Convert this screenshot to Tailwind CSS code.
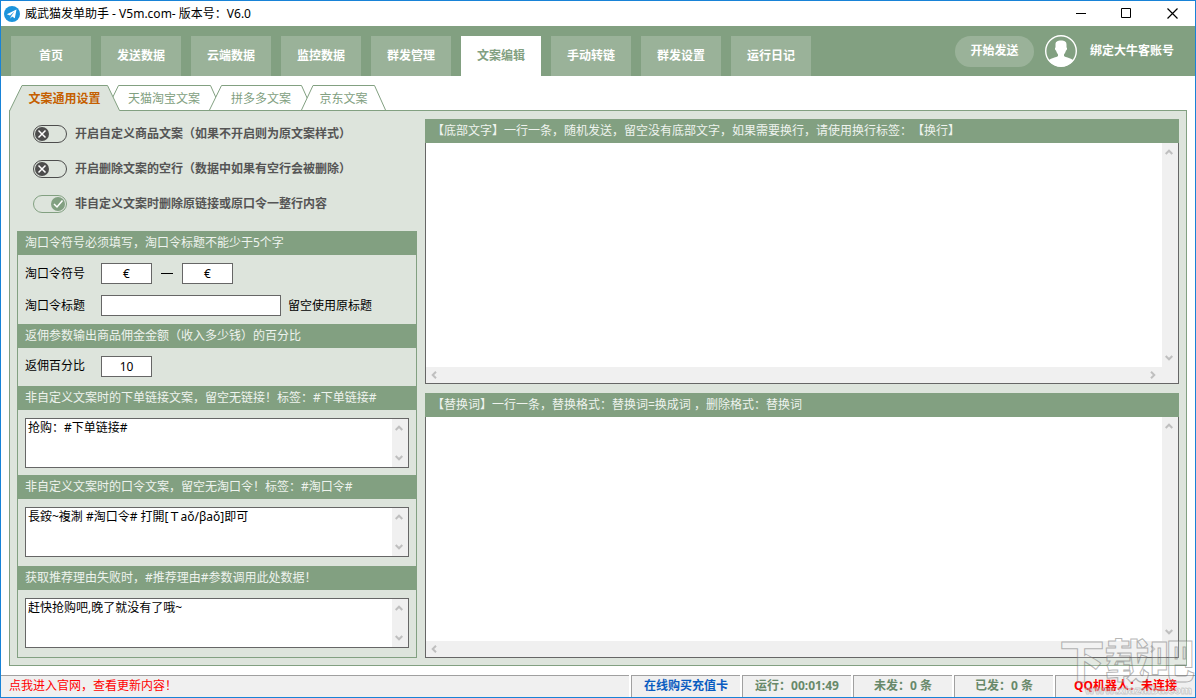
<!DOCTYPE html>
<html lang="zh-CN">
<head>
<meta charset="utf-8">
<title>威武猫发单助手</title>
<script src="https://cdn.jsdelivr.net/npm/@tailwindcss/browser@4"></script>
</head>
<body class="font-['Noto_Sans','Noto_Sans_CJK_SC',sans-serif] text-xs text-black [text-spacing-trim:space-all]">
<svg class="hidden">
  <symbol id="up" viewBox="0 0 8 6"><path d="M0.7 5 4 1.7 7.300 5" fill="none" stroke="#bfbfbf" stroke-width="2"/></symbol>
  <symbol id="down" viewBox="0 0 8 6"><path d="M0.7 1 4 4.3 7.3 1" fill="none" stroke="#bfbfbf" stroke-width="2"/></symbol>
  <symbol id="left" viewBox="0 0 6 8"><path d="M5 0.7 1.700 4 5 7.300" fill="none" stroke="#bfbfbf" stroke-width="2"/></symbol>
  <symbol id="right" viewBox="0 0 6 8"><path d="M1 0.7 4.300 4 1 7.3" fill="none" stroke="#bfbfbf" stroke-width="2"/></symbol>
</svg>
<div class="relative flex min-h-screen flex-col overflow-hidden border border-[#1883d7] bg-white">

  <!-- Title bar -->
  <header class="flex h-[25px] items-center pl-[3px]">
    <svg class="size-4" viewBox="0 0 16 16"><circle cx="8" cy="8" r="8" fill="#1c94dc"/><path d="M2.800 8.300 12.500 3.500 10.800 12.300 8 10.500 6.500 12.500 6 9.500Z" fill="#fff"/><path d="M6 9.500 10.500 5.500 7.200 10 6.500 12.500Z" fill="#1c94dc"/></svg>
    <h1 class="ml-[5px] flex-1 leading-4">威武猫发单助手 - V5m.com- 版本号：V6.0</h1>
    <div class="flex">
      <button class="grid h-6 w-[45px] place-items-center" aria-label="最小化"><svg class="h-[11px] w-[11px]" viewBox="0 0 11 11"><path d="M0 5.5H10" stroke="#000"/></svg></button>
      <button class="grid h-6 w-[45px] place-items-center" aria-label="最大化"><svg class="h-[11px] w-[11px]" viewBox="0 0 11 11"><path d="M.5.5H9.500V9.500H.5Z" fill="none" stroke="#000"/></svg></button>
      <button class="grid h-6 w-[46px] place-items-center" aria-label="关闭"><svg class="h-[11px] w-[11px]" viewBox="0 0 11 11"><path d="M.5.5 10.500 10.500M10.500.5.5 10.500" stroke="#000" stroke-width="1.200"/></svg></button>
    </div>
  </header>

  <!-- Main navigation -->
  <nav class="flex h-[50px] items-end bg-[#82a081] pl-[10px] font-bold text-white">
    <div class="flex flex-1 gap-[10px]">
      <button class="h-10 w-20 bg-[#9ab299]">首页</button>
      <button class="h-10 w-20 bg-[#9ab299]">发送数据</button>
      <button class="h-10 w-20 bg-[#9ab299]">云端数据</button>
      <button class="h-10 w-20 bg-[#9ab299]">监控数据</button>
      <button class="h-10 w-20 bg-[#9ab299]">群发管理</button>
      <button class="h-10 w-20 bg-white text-[#82a081]">文案编辑</button>
      <button class="h-10 w-20 bg-[#9ab299]">手动转链</button>
      <button class="h-10 w-20 bg-[#9ab299]">群发设置</button>
      <button class="h-10 w-20 bg-[#9ab299]">运行日记</button>
    </div>
    <div class="flex items-center self-stretch pr-[21px]">
      <button class="h-[31px] w-[79px] rounded-full bg-[#9ab299]">开始发送</button>
      <svg class="ml-[11px] size-8" viewBox="0 0 32 32"><circle cx="16" cy="16" r="15.300" fill="none" stroke="#fff" stroke-width="1.400"/><path d="M10.500 9.500C10.500 6.500 12.500 5.500 16 5.500S21.500 6.500 21.500 9.500V12.500C22.500 12.500 22 15.500 21 15.500 20.500 17.500 19.500 18.500 19 19.500V21C20.500 22.500 25.500 22.500 28.500 25.500A16 16 0 0 1 3.500 25.500C6.500 22.500 11.500 22.500 13 21V19.500C12.500 18.500 11.500 17.500 11 15.500 10 15.500 9.500 12.500 10.500 12.500Z" fill="#fff"/></svg>
      <button class="ml-[13px]">绑定大牛客账号</button>
    </div>
  </nav>

  <main class="flex flex-1 flex-col px-2 pt-[9px] pb-[9px]">
    <!-- Sub tabs -->
    <div class="relative z-10 -mb-px flex h-[26px] text-[#82a081]">
      <button class="relative z-20 h-[26px] w-[111px] pt-[2px] font-bold text-[#c55f00]">
        <svg class="absolute inset-0 size-full" viewBox="0 0 111 26"><path d="M.5 26 13 .5H98.500L110.500 25.500V26Z" fill="#dde4dc"/><path d="M.5 26 13 .5H98.500L110.500 25.500" fill="none" stroke="#82a081"/></svg>
        <span class="relative">文案通用设置</span>
      </button>
      <button class="relative -ml-[14px] h-[25px] w-[116px] pt-[2px]">
        <svg class="absolute inset-0 size-full" viewBox="0 0 116 25"><path d="M.5 25 12.500 .5H104.500L115.500 25" fill="#fff" stroke="#82a081"/></svg>
        <span class="relative">天猫淘宝文案</span>
      </button>
      <button class="relative -ml-[13px] h-[25px] w-[104px] pt-[2px]">
        <svg class="absolute inset-0 size-full" viewBox="0 0 104 25"><path d="M.5 25 12.500 .5H92.500L103.500 25" fill="#fff" stroke="#82a081"/></svg>
        <span class="relative">拼多多文案</span>
      </button>
      <button class="relative -ml-3 h-[25px] w-[85px] pt-[2px]">
        <svg class="absolute inset-0 size-full" viewBox="0 0 85 25"><path d="M.5 25 12 .5H73.500L84.500 25" fill="#fff" stroke="#82a081"/></svg>
        <span class="relative">京东文案</span>
      </button>
    </div>

    <div class="flex flex-1 gap-2 border border-[#82a081] bg-[#dde4dc] px-[7px] pt-2 pb-[7px]">
      <!-- Left column -->
      <section class="w-[400px] shrink-0">
        <div class="flex h-28 flex-col gap-[17px] pt-[6px] pl-4 font-bold text-[#555]">
          <label class="flex h-[18px] items-center gap-2"><input type="checkbox" class="sr-only">
            <svg class="h-[18px] w-[34px]" viewBox="0 0 34 18"><rect x=".5" y=".5" width="33" height="17" rx="8.500" fill="none" stroke="#4d4d4d"/><circle cx="9" cy="9" r="7" fill="#4d4d4d"/><path d="M5.500 5.500 12.500 12.500M12.500 5.500 5.500 12.500" stroke="#fff" stroke-width="1.500"/></svg>
            开启自定义商品文案（如果不开启则为原文案样式）</label>
          <label class="flex h-[18px] items-center gap-2"><input type="checkbox" class="sr-only">
            <svg class="h-[18px] w-[34px]" viewBox="0 0 34 18"><rect x=".5" y=".5" width="33" height="17" rx="8.500" fill="none" stroke="#4d4d4d"/><circle cx="9" cy="9" r="7" fill="#4d4d4d"/><path d="M5.500 5.500 12.500 12.500M12.500 5.500 5.500 12.500" stroke="#fff" stroke-width="1.500"/></svg>
            开启删除文案的空行（数据中如果有空行会被删除）</label>
          <label class="flex h-[18px] items-center gap-2"><input type="checkbox" checked class="sr-only">
            <svg class="h-[18px] w-[34px]" viewBox="0 0 34 18"><rect x=".5" y=".5" width="33" height="17" rx="8.500" fill="none" stroke="#82a081"/><circle cx="25" cy="9" r="7" fill="#82a081"/><path d="M21 9 24 12 29.500 5.500" fill="none" stroke="#fff" stroke-width="1.500"/></svg>
            非自定义文案时删除原链接或原口令一整行内容</label>
        </div>

        <div class="border-x border-b border-[#82a081]">
          <h2 class="h-6 bg-[#82a081] pl-[7px] leading-6 text-[#eef3ee]">淘口令符号必须填写，淘口令标题不能少于5个字</h2>
          <div class="flex flex-col gap-[11px] px-[7px] py-2">
            <div class="flex h-[21px] items-center">
              <label for="sym1" class="w-[76px] leading-4">淘口令符号</label>
              <input id="sym1" value="€" class="h-[21px] w-[51px] border border-[#666] bg-white text-center">
              <span class="mx-[9px] h-px w-3 bg-black"></span>
              <input aria-label="淘口令符号结尾" value="€" class="h-[21px] w-[51px] border border-[#666] bg-white text-center">
            </div>
            <div class="flex h-[21px] items-center">
              <label for="tit" class="w-[76px] leading-4">淘口令标题</label>
              <input id="tit" class="mr-[7px] h-[21px] w-[180px] border border-[#666] bg-white px-1">
              <span class="leading-4">留空使用原标题</span>
            </div>
          </div>
          <h2 class="h-6 bg-[#82a081] pl-[7px] leading-6 text-[#eef3ee]">返佣参数输出商品佣金金额（收入多少钱）的百分比</h2>
          <div class="flex h-[38px] items-start px-[7px] pt-2">
            <label for="pct" class="w-[76px] leading-5">返佣百分比</label>
            <input id="pct" value="10" class="h-[21px] w-[51px] border border-[#666] bg-white text-center">
          </div>
          <h2 class="h-6 bg-[#82a081] pl-[7px] leading-6 text-[#eef3ee]"><label for="t1">非自定义文案时的下单链接文案，留空无链接！标签：#下单链接#</label></h2>
          <div class="h-[65px] px-[7px] pt-2">
            <div class="flex h-[50px] border border-[#666] bg-white">
              <textarea id="t1" class="flex-1 resize-none overflow-hidden px-[2px] pt-px leading-4">抢购：#下单链接#</textarea>
              <div class="flex w-4 flex-col items-center justify-between bg-[#f0f0f0] py-[6px] pr-[2px]"><svg class="h-[6px] w-2"><use href="#up"/></svg><svg class="h-[6px] w-2"><use href="#down"/></svg></div>
            </div>
          </div>
          <h2 class="h-6 bg-[#82a081] pl-[7px] leading-6 text-[#eef3ee]"><label for="t2">非自定义文案时的口令文案，留空无淘口令！标签：#淘口令#</label></h2>
          <div class="h-[67px] px-[7px] pt-2">
            <div class="flex h-[50px] border border-[#666] bg-white">
              <textarea id="t2" class="flex-1 resize-none overflow-hidden px-[2px] pt-px leading-4">長銨~複淛 #淘口令# 打開[Ｔaǒ/βaǒ]即可</textarea>
              <div class="flex w-4 flex-col items-center justify-between bg-[#f0f0f0] py-[6px] pr-[2px]"><svg class="h-[6px] w-2"><use href="#up"/></svg><svg class="h-[6px] w-2"><use href="#down"/></svg></div>
            </div>
          </div>
          <h2 class="h-6 bg-[#82a081] pl-[7px] leading-6 text-[#eef3ee]"><label for="t3">获取推荐理由失败时，#推荐理由#参数调用此处数据！</label></h2>
          <div class="h-[67px] px-[7px] pt-2">
            <div class="flex h-[50px] border border-[#666] bg-white">
              <textarea id="t3" class="flex-1 resize-none overflow-hidden px-[2px] pt-px leading-4">赶快抢购吧,晚了就没有了哦~</textarea>
              <div class="flex w-4 flex-col items-center justify-between bg-[#f0f0f0] py-[6px] pr-[2px]"><svg class="h-[6px] w-2"><use href="#up"/></svg><svg class="h-[6px] w-2"><use href="#down"/></svg></div>
            </div>
          </div>
        </div>
      </section>

      <!-- Right column -->
      <section class="flex flex-1 flex-col gap-[9px]">
        <div class="flex flex-1 flex-col">
          <h2 class="h-6 bg-[#82a081] pl-[7px] leading-6 text-[#eef3ee]"><label for="t4">【底部文字】一行一条，随机发送，留空没有底部文字，如果需要换行，请使用换行标签：【换行】</label></h2>
          <div class="flex flex-1 border-x border-b border-[#666] bg-white">
            <div class="flex flex-1 flex-col">
              <textarea id="t4" class="flex-1 resize-none overflow-hidden px-[2px] leading-4"></textarea>
              <div class="flex h-4 items-center justify-between bg-[#f0f0f0] pr-[6px] pl-[5px]"><svg class="h-2 w-[6px]"><use href="#left"/></svg><svg class="h-2 w-[6px]"><use href="#right"/></svg></div>
            </div>
            <div class="flex w-4 flex-col items-center justify-between bg-[#f0f0f0] pt-[6px] pr-[2px] pb-[22px]"><svg class="h-[6px] w-2"><use href="#up"/></svg><svg class="h-[6px] w-2"><use href="#down"/></svg></div>
          </div>
        </div>
        <div class="flex flex-1 flex-col">
          <h2 class="h-6 bg-[#82a081] pl-[7px] leading-6 text-[#eef3ee]"><label for="t5">【替换词】一行一条，替换格式：替换词=换成词 ，删除格式：替换词</label></h2>
          <div class="flex flex-1 border-x border-b border-[#666] bg-white">
            <div class="flex flex-1 flex-col">
              <textarea id="t5" class="flex-1 resize-none overflow-hidden px-[2px] leading-4"></textarea>
              <div class="flex h-4 items-center justify-between bg-[#f0f0f0] pr-[6px] pl-[5px]"><svg class="h-2 w-[6px]"><use href="#left"/></svg><svg class="h-2 w-[6px]"><use href="#right"/></svg></div>
            </div>
            <div class="flex w-4 flex-col items-center justify-between bg-[#f0f0f0] pt-[6px] pr-[2px] pb-[22px]"><svg class="h-[6px] w-2"><use href="#up"/></svg><svg class="h-[6px] w-2"><use href="#down"/></svg></div>
          </div>
        </div>
      </section>
    </div>
  </main>

  <!-- Status bar -->
  <footer class="flex h-[22px] gap-[2px] text-center leading-5 font-bold text-[#68896a]">
    <div class="flex-1 border-t border-[#a0a0a0] bg-[#f0f0f0] pl-2 text-left font-normal"><a href="#" class="text-[#f00]">点我进入官网，查看更新内容！</a></div>
    <div class="w-[109px] border-t border-l border-[#a0a0a0] bg-[#f0f0f0]"><a href="#" class="text-[#0a5cc0]">在线购买充值卡</a></div>
    <div class="w-[109px] border-t border-l border-[#a0a0a0] bg-[#f0f0f0]">运行：00:01:49</div>
    <div class="w-[99px] border-t border-l border-[#a0a0a0] bg-[#f0f0f0]">未发：0 条</div>
    <div class="w-[99px] border-t border-l border-[#a0a0a0] bg-[#f0f0f0]">已发：0 条</div>
    <div class="w-[140px] border-t border-l border-[#a0a0a0] bg-[#f0f0f0] text-[#f00]">QQ机器人：未连接</div>
  </footer>

  <!-- Site watermark -->
  <div class="pointer-events-none absolute right-0 -bottom-px w-[136px] text-right font-black" aria-hidden="true">
    <p class="text-center text-[45px] leading-[42px] text-white/20 [-webkit-text-stroke:1px_rgba(110,110,110,0.5)]">下载吧</p>
    <p class="pr-[3px] text-[11px] leading-4 text-white/40 [-webkit-text-stroke:1px_rgba(110,110,110,0.3)]">www.xiazaiba.com</p>
  </div>
</div>
</body>
</html>
